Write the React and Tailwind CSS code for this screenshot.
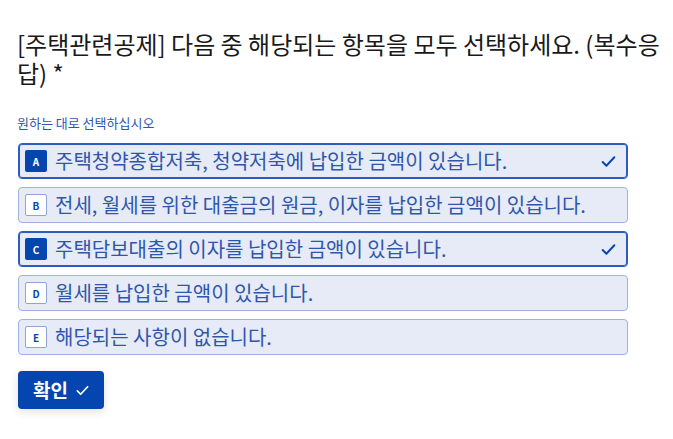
import React, { useState } from 'react';

const font = { fontFamily: '"Noto Sans CJK KR", "Noto Sans", sans-serif' };

const options = [
  { key: 'A', label: '주택청약종합저축, 청약저축에 납입한 금액이 있습니다.' },
  { key: 'B', label: '전세, 월세를 위한 대출금의 원금, 이자를 납입한 금액이 있습니다.' },
  { key: 'C', label: '주택담보대출의 이자를 납입한 금액이 있습니다.' },
  { key: 'D', label: '월세를 납입한 금액이 있습니다.' },
  { key: 'E', label: '해당되는 사항이 없습니다.' },
];

function Check({ className }) {
  return (
    <svg viewBox="0 0 16 16" className={className} fill="none" stroke="currentColor" strokeWidth="1.8" strokeLinecap="round" strokeLinejoin="round">
      <path d="M2.5 8.5 L6 12 L13.5 4" />
    </svg>
  );
}

export default function App() {
  const [selected, setSelected] = useState({ A: true, C: true });

  const toggle = (k) => setSelected((s) => ({ ...s, [k]: !s[k] }));

  return (
    <div className="min-h-screen bg-white pl-[17px] pr-[8px] pt-[29px]" style={font}>
      <h1 className="text-[24px] leading-[29px] text-[#191919] font-normal">
        [주택관련공제] 다음 중 해당되는 항목을 모두 선택하세요. (복수응답) *
      </h1>

      <p className="mt-[27px] text-[13px] leading-[18px] text-[#2f56b0]">원하는 대로 선택하십시오</p>

      <div className="mt-[11px] flex flex-col gap-[8px] w-[610px] ml-[1px]">
        {options.map(({ key, label }) => {
          const on = !!selected[key];
          return (
            <button
              key={key}
              onClick={() => toggle(key)}
              className={`h-[36px] flex items-center pl-[6px] pr-[10px] rounded-[4px] bg-[#e6ebf7] border text-left ${on ? 'border-[#2c5cbf] shadow-[inset_0_0_0_1px_#2c5cbf]' : 'border-[#9db2e2]'}`}
            >
              <span
                className={`w-[22px] h-[22px] shrink-0 flex items-center justify-center rounded-[2px] text-[10px] font-bold ${on ? 'bg-[#0445af] text-white' : 'bg-white text-[#0445af] border border-[#8ea5dc]'}`}
              >
                {key}
              </span>
              <span className="ml-[8px] flex-1 text-[20px] leading-[26px] text-[#3056aa] whitespace-nowrap">{label}</span>
              {on && <Check className="w-[17px] h-[17px] text-[#0445af]" />}
            </button>
          );
        })}
      </div>

      <button className="mt-[16px] ml-[1px] h-[38px] pl-[15px] pr-[14px] flex items-center gap-[7px] rounded-[4px] bg-[#0445af] text-white text-[19px] font-bold shadow-[0_3px_10px_rgba(0,0,0,0.12)]">
        확인
        <Check className="w-[15px] h-[15px]" />
      </button>
    </div>
  );
}
